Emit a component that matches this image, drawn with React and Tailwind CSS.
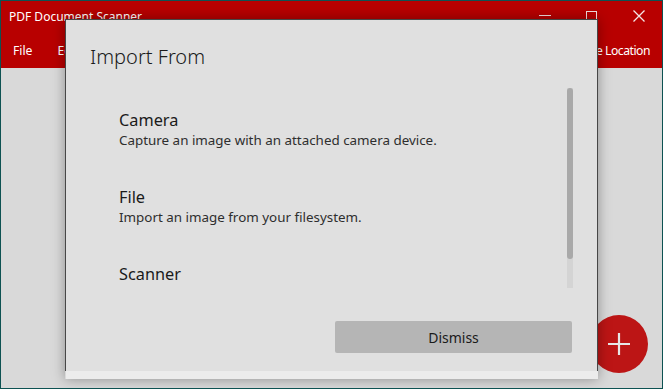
import React from 'react';

const sources = [
    { title: 'Camera', desc: 'Capture an image with an attached camera device.' },
    { title: 'File', desc: 'Import an image from your filesystem.' },
    { title: 'Scanner' },
];

const App = () => {
    return (
        <div className="relative w-[663px] h-[389px] overflow-hidden border border-[#0d5252] bg-[#d9d9d9] text-white" style={{ fontFamily: '"Noto Sans", "Open Sans", sans-serif' }}>
            {/* title bar */}
            <div className="h-[33px] bg-[#b80000] flex items-start">
                <span className="pl-[8px] pt-[7px] text-[12px] leading-[17px]">PDF Document Scanner</span>
                <div className="ml-auto flex h-[33px]">
                    <button className="w-[47px] flex items-center justify-center pb-[3px]">
                        <svg width="12" height="12" viewBox="0 0 12 12"><path d="M0 5.5h12" stroke="#f2dede" strokeWidth="1" /></svg>
                    </button>
                    <button className="w-[47px] flex items-center justify-center pb-[3px]">
                        <svg width="11" height="11" viewBox="0 0 11 11"><rect x="0.5" y="0.5" width="10" height="10" fill="none" stroke="#f2dede" strokeWidth="1" /></svg>
                    </button>
                    <button className="w-[47px] flex items-center justify-center pb-[3px]">
                        <svg width="12" height="12" viewBox="0 0 12 12"><path d="M0.5 0.5l11 11M11.5 0.5l-11 11" stroke="#f4e6e6" strokeWidth="1.3" /></svg>
                    </button>
                </div>
            </div>

            {/* menu bar */}
            <div className="h-[34px] bg-[#b80000] flex items-center text-[12.2px] pl-[12px] pr-[12px] pt-px">
                <span className="mr-[25px]">File</span>
                <span className="mr-[16px]">Edit</span>
                <span className="mr-[16px]">View</span>
                <span className="ml-auto tracking-[-0.5px]">Open Save Location</span>
            </div>

            {/* add button */}
            <button className="absolute left-[589px] top-[314px] w-[58px] h-[58px] rounded-full bg-[#bc1515] flex items-center justify-center">
                <svg width="22" height="22" viewBox="0 0 22 22"><path d="M0 11h22M11 0v22" stroke="#e6e6e6" strokeWidth="2.2" /></svg>
            </button>

            {/* dialog */}
            <div className="absolute left-[64px] top-[18px] w-[533px] flex flex-col shadow-[0_0_12px_rgba(0,0,0,0.35)]">
                <div className="h-[352px] bg-[#e0e0e0] border-x border-t border-[#474747] pt-[23px] pl-[24px] pr-[24px] text-[#1a1a1a]">
                    <h2 className="text-[20px] leading-[28px] font-light">Import From</h2>
                    <div className="mt-[17px] h-[200px] flex">
                        <div className="flex-1 overflow-hidden pl-[29px] pt-[21px] flex flex-col gap-[37px]">
                            {sources.map(s => (
                                <div key={s.title}>
                                    <div className="text-[16.3px] leading-[22px]">{s.title}</div>
                                    {s.desc && <div className="text-[13.4px] leading-[18px] text-[#2e2e2e]">{s.desc}</div>}
                                </div>
                            ))}
                        </div>
                        <div className="w-[6px] h-[200px] flex flex-col bg-[#d4d4d4]">
                            <div className="h-[171px] rounded-full bg-[#a9a9a9]"></div>
                        </div>
                    </div>
                    <div className="mt-[33px] flex justify-end pr-px">
                        <button className="w-[237px] h-[32px] rounded-[2px] bg-[#b5b5b5] text-[14px] text-[#1a1a1a]">Dismiss</button>
                    </div>
                </div>
                <div className="h-[8px] ml-px bg-[#ececec]"></div>
            </div>
        </div>
    );
};

export default App;
